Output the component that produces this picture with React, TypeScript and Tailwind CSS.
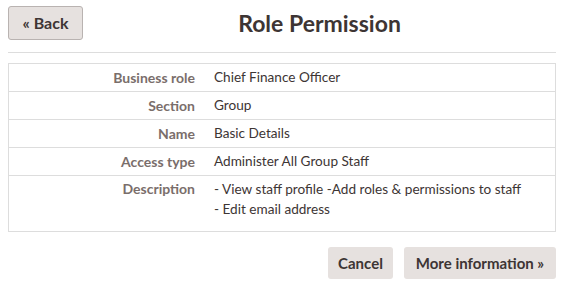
import React from "react";

const rows: [string, React.ReactNode][] = [
  ["Business role", "Chief Finance Officer"],
  ["Section", "Group"],
  ["Name", "Basic Details"],
  ["Access type", "Administer All Group Staff"],
];

export default function App() {
  return (
    <div className="w-[567px] h-[290px] bg-white pl-2 pr-[11px] pt-[6px] text-[#3d3534]" style={{ fontFamily: "Lato, 'Open Sans', sans-serif" }}>
      <div className="h-[34px] flex items-center">
        <button className="h-[34px] w-[75px] shrink-0 rounded-[3px] border border-[#b9b3b1] bg-[#e6e1df] text-[16px] font-bold text-[#3d3534]">« Back</button>
        <h1 className="flex-1 text-center text-[23px] font-bold">Role Permission</h1>
      </div>
      <div className="mt-[12px] border-t border-[#dddddd]" />
      <div className="mt-[10px] border border-[#dddddd]">
        {rows.map(([k, v]) => (
          <div key={k} className="flex h-[28px] items-center border-b border-[#dddddd] text-[14px]">
            <div className="w-[186px] text-right font-bold text-[#7a6e6b]">{k}</div>
            <div className="pl-[19px] text-[13.6px]">{v}</div>
          </div>
        ))}
        <div className="flex h-[55px] pt-[3px] text-[14px] leading-[20px]">
          <div className="w-[186px] text-right font-bold text-[#7a6e6b]">Description</div>
          <div className="pl-[19px] text-[13.6px]">
            <div>- View staff profile -Add roles &amp; permissions to staff</div>
            <div>- Edit email address</div>
          </div>
        </div>
      </div>
      <div className="mt-[15px] flex justify-end gap-[11px]">
        <button className="h-[32px] w-[65px] rounded-[3px] bg-[#e6e1df] text-[15px] font-bold">Cancel</button>
        <button className="h-[32px] w-[152px] rounded-[3px] bg-[#e6e1df] text-[15px] font-bold">More information »</button>
      </div>
    </div>
  );
}
